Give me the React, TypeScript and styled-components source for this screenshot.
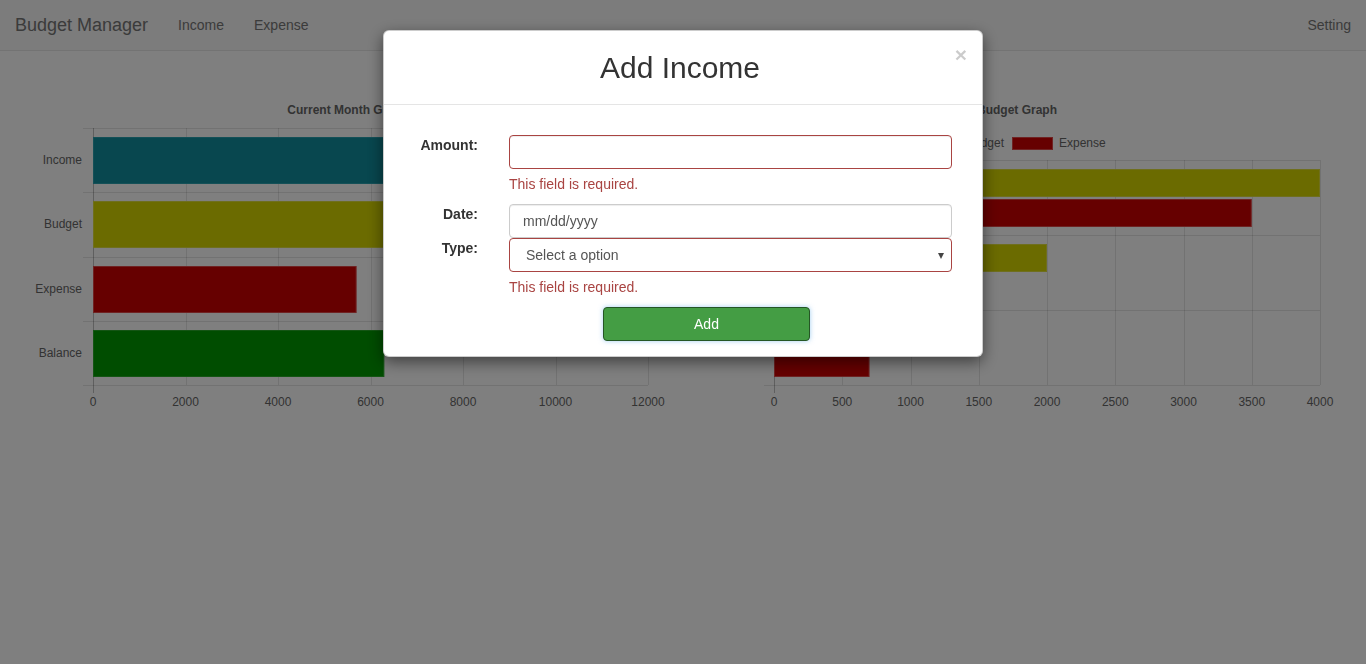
import React from "react";
import styled, { createGlobalStyle } from "styled-components";

const GlobalStyle = createGlobalStyle`
  html, body {
    margin: 0;
    padding: 0;
    background: #fff;
    font-family: "Liberation Sans", Arial, sans-serif;
    font-size: 14px;
    color: #333;
    overflow: hidden;
  }
  * { box-sizing: border-box; }
`;

const Navbar = styled.nav`
  height: 51px;
  background: #f8f8f8;
  border-bottom: 1px solid #e7e7e7;
  display: flex;
  align-items: center;
`;

const Brand = styled.a`
  padding: 0 15px;
  font-size: 18px;
  line-height: 20px;
  color: #777;
`;

const NavLink = styled.a`
  padding: 0 15px;
  font-size: 14px;
  line-height: 20px;
  color: #777;
`;

const Spacer = styled.div`
  flex: 1;
`;

const ChartRow = styled.main`
  display: flex;
`;

const ChartSvg = styled.svg`
  display: block;
  width: 683px;
  height: 370px;
  font-family: "Liberation Sans", Arial, sans-serif;
`;

const Overlay = styled.div`
  position: fixed;
  inset: 0;
  background: rgba(0, 0, 0, 0.5);
  display: flex;
  justify-content: center;
  align-items: flex-start;
  padding-top: 30px;
`;

const Modal = styled.div`
  width: 600px;
  background: #fff;
  border: 1px solid rgba(0, 0, 0, 0.2);
  border-radius: 6px;
  box-shadow: 0 5px 15px rgba(0, 0, 0, 0.5);
`;

const ModalHeader = styled.div`
  padding: 15px;
  border-bottom: 1px solid #e5e5e5;
  display: grid;
  grid-template-columns: 1fr auto 1fr;
  align-items: start;
`;

const ModalTitle = styled.h4`
  grid-column: 2;
  margin: 0 6px 0 0;
  font-size: 30px;
  font-weight: 400;
  line-height: 43px;
  color: #333;
`;

const CloseButton = styled.button`
  grid-column: 3;
  justify-self: end;
  margin: -2px 0 0 0;
  padding: 0;
  border: 0;
  background: transparent;
  font-family: "Liberation Sans", Arial, sans-serif;
  font-size: 21px;
  font-weight: 700;
  line-height: 21px;
  color: #000;
  opacity: 0.2;
`;

const ModalBody = styled.div`
  padding: 30px 15px 15px;
`;

const Form = styled.form`
  display: grid;
  grid-template-columns: 79px 443px;
  column-gap: 31px;
`;

const Label = styled.label`
  grid-column: 1;
  text-align: right;
  font-weight: 700;
  padding-top: 0;
  line-height: 20px;
  color: #333;
`;

const Field = styled.input<{ $error?: boolean }>`
  grid-column: 2;
  height: 34px;
  width: 100%;
  padding: 6px 13px;
  font-family: "Liberation Sans", Arial, sans-serif;
  font-size: 14px;
  color: #555;
  background: #fff;
  border: 1px solid ${(p) => (p.$error ? "#a94442" : "#ccc")};
  border-radius: 4px;
  box-shadow: inset 0 1px 1px rgba(0, 0, 0, 0.075);
  outline: none;
  &::placeholder {
    color: #555;
  }
`;

const SelectWrap = styled.div`
  grid-column: 2;
  position: relative;
`;

const Select = styled.select`
  appearance: none;
  -webkit-appearance: none;
  display: block;
  width: 100%;
  height: 34px;
  padding: 6px 16px;
  font-family: "Liberation Sans", Arial, sans-serif;
  font-size: 14px;
  color: #555;
  background: #fff;
  border: 1px solid #a94442;
  border-radius: 4px;
  outline: none;
`;

const Caret = styled.span`
  position: absolute;
  right: 8px;
  top: 15px;
  width: 0;
  height: 0;
  border-left: 3.5px solid transparent;
  border-right: 3.5px solid transparent;
  border-top: 6px solid #444;
  pointer-events: none;
`;

const ErrorText = styled.span`
  grid-column: 2;
  margin: 5px 0 10px;
  line-height: 20px;
  color: #a94442;
`;

const SubmitButton = styled.button`
  grid-column: 2;
  margin-left: 94px;
  width: 207px;
  height: 34px;
  font-family: "Liberation Sans", Arial, sans-serif;
  font-size: 14px;
  color: #fff;
  background: #449d44;
  border: 1px solid #255625;
  border-radius: 4px;
  box-shadow: 0 0 5px rgba(102, 175, 233, 0.6);
`;

type Paint = { color: string; stroke: string };
type Series = { paints: Paint[]; values: number[] };

type ChartProps = {
  x0: number;
  x1: number;
  max: number;
  step: number;
  top: number;
  bottom: number;
  labels: string[];
  labelRight: number;
  series: Series[];
  barHeight: number;
  barOffset: number;
  barGap: number;
  title: string;
  titleX: number;
  titleAnchor: "middle" | "end";
  legend?: ({ x: number; text: string } & Paint)[];
};

const HBarChart: React.FC<ChartProps> = (p) => {
  const sx = (v: number) => p.x0 + (v / p.max) * (p.x1 - p.x0);
  const n = p.labels.length;
  const ch = (p.bottom - p.top) / n;
  const ticks: number[] = [];
  for (let v = 0; v <= p.max; v += p.step) ticks.push(v);
  return (
    <ChartSvg viewBox="0 0 683 370">
      <text
        x={p.titleX}
        y={63}
        textAnchor={p.titleAnchor}
        fontSize={12}
        fontWeight={700}
        fill="#666"
      >
        {p.title}
      </text>
      {p.legend?.map((l) => (
        <g key={l.text}>
          <rect x={l.x + 0.5} y={86.5} width={40} height={12} fill={l.color} stroke={l.stroke} />
          <text x={l.x + 47} y={96} fontSize={12} fill="#666">
            {l.text}
          </text>
        </g>
      ))}
      {ticks.map((v) => (
        <line
          key={"v" + v}
          x1={Math.round(sx(v)) + 0.5}
          x2={Math.round(sx(v)) + 0.5}
          y1={p.top}
          y2={p.bottom + (v === 0 ? 8 : 0)}
          stroke={v === 0 ? "rgba(0,0,0,0.25)" : "rgba(0,0,0,0.1)"}
        />
      ))}
      {Array.from({ length: n + 1 }, (_, i) => (
        <line
          key={"h" + i}
          x1={p.x0 - 10}
          x2={p.x1}
          y1={Math.round(p.top + i * ch) + 0.5}
          y2={Math.round(p.top + i * ch) + 0.5}
          stroke="rgba(0,0,0,0.1)"
        />
      ))}
      {p.labels.map((lab, i) => (
        <text
          key={lab}
          x={p.labelRight}
          y={p.top + i * ch + ch / 2 + 4}
          textAnchor="end"
          fontSize={12}
          fill="#666"
        >
          {lab}
        </text>
      ))}
      {p.series.map((s, si) =>
        s.values.map((v, i) => {
          const paint = s.paints[i % s.paints.length];
          return (
            <rect
              key={si + "-" + i}
              x={p.x0 + 0.5}
              y={Math.round(p.top + i * ch + p.barOffset + si * (p.barHeight + p.barGap)) + 0.5}
              width={Math.max(0, sx(v) - p.x0 - 1)}
              height={p.barHeight - 1}
              fill={paint.color}
              stroke={paint.stroke}
            />
          );
        })
      )}
      {ticks.map((v) => (
        <text
          key={"t" + v}
          x={sx(v)}
          y={355}
          textAnchor="middle"
          fontSize={12}
          fill="#666"
        >
          {v}
        </text>
      ))}
    </ChartSvg>
  );
};

const INCOME: Paint = { color: "rgb(16,142,158)", stroke: "rgb(40,160,175)" };
const BUDGET: Paint = { color: "rgb(214,214,0)", stroke: "rgb(222,222,60)" };
const EXPENSE: Paint = { color: "rgb(204,0,0)", stroke: "rgb(222,70,70)" };
const BALANCE: Paint = { color: "rgb(0,154,0)", stroke: "rgb(40,170,40)" };

export default function App() {
  return (
    <>
      <GlobalStyle />
      <Navbar>
        <Brand>Budget Manager</Brand>
        <NavLink>Income</NavLink>
        <NavLink>Expense</NavLink>
        <Spacer />
        <NavLink>Setting</NavLink>
      </Navbar>
      <ChartRow>
        <HBarChart
          x0={93}
          x1={648}
          max={12000}
          step={2000}
          top={77}
          bottom={334}
          labels={["Income", "Budget", "Expense", "Balance"]}
          labelRight={82}
          barHeight={47}
          barOffset={9}
          barGap={0}
          title="Current Month Graph"
          titleX={348}
          titleAnchor="middle"
          series={[
            {
              paints: [INCOME, BUDGET, EXPENSE, BALANCE],
              values: [12000, 8000, 5700, 6300],
            },
          ]}
        />
        <HBarChart
          x0={91}
          x1={637}
          max={4000}
          step={500}
          top={109}
          bottom={334}
          labels={["Food", "Rent", "Other"]}
          labelRight={80}
          barHeight={28}
          barOffset={9}
          barGap={2}
          title="Category Budget Graph"
          titleX={374}
          titleAnchor="end"
          legend={[
            { x: 236, text: "Budget", ...BUDGET },
            { x: 329, text: "Expense", ...EXPENSE },
          ]}
          series={[
            { paints: [BUDGET], values: [4000, 2000, 1000] },
            { paints: [EXPENSE], values: [3500, 1000, 700] },
          ]}
        />
      </ChartRow>
      <Overlay>
        <Modal>
          <ModalHeader>
            <ModalTitle>Add Income</ModalTitle>
            <CloseButton type="button">×</CloseButton>
          </ModalHeader>
          <ModalBody>
            <Form onSubmit={(e) => e.preventDefault()}>
              <Label>Amount:</Label>
              <Field $error type="text" />
              <ErrorText>This field is required.</ErrorText>
              <Label>Date:</Label>
              <Field type="text" placeholder="mm/dd/yyyy" />
              <Label>Type:</Label>
              <SelectWrap>
                <Select defaultValue="">
                  <option value="">Select a option</option>
                  <option value="salary">Salary</option>
                  <option value="other">Other</option>
                </Select>
                <Caret />
              </SelectWrap>
              <ErrorText>This field is required.</ErrorText>
              <SubmitButton type="submit">Add</SubmitButton>
            </Form>
          </ModalBody>
        </Modal>
      </Overlay>
    </>
  );
}
